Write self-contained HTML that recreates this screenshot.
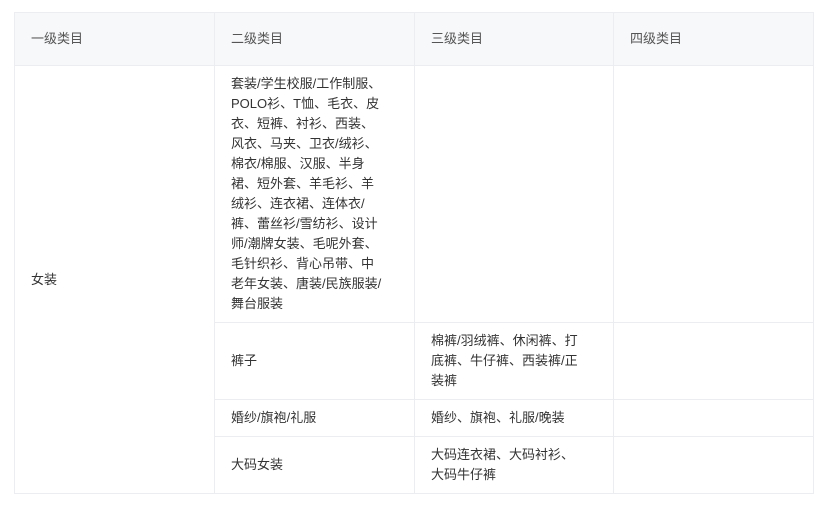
<!DOCTYPE html>
<html><head><meta charset="utf-8"><style>
html,body{margin:0;padding:0;background:#fff;width:827px;height:513px;overflow:hidden}
table{position:absolute;left:14px;top:12px;border-collapse:collapse;table-layout:fixed;width:799px;font-family:"Liberation Sans","Noto Sans CJK SC",sans-serif;font-size:13px;color:#333}
td,th{border:1px solid #ebedf0;padding:8px 16px;line-height:20px;text-align:left;vertical-align:middle;font-weight:normal;white-space:nowrap}
th{background:#f7f8fa;color:#555;height:36px;padding-top:8px;padding-bottom:8px}
</style></head><body>
<table>
<colgroup><col style="width:200px"><col style="width:200px"><col style="width:199px"><col style="width:200px"></colgroup>
<tr><th>一级类目</th><th>二级类目</th><th>三级类目</th><th>四级类目</th></tr>
<tr><td rowspan="4">女装</td><td>套装/学生校服/工作制服、<br>POLO衫、T恤、毛衣、皮<br>衣、短裤、衬衫、西装、<br>风衣、马夹、卫衣/绒衫、<br>棉衣/棉服、汉服、半身<br>裙、短外套、羊毛衫、羊<br>绒衫、连衣裙、连体衣/<br>裤、蕾丝衫/雪纺衫、设计<br>师/潮牌女装、毛呢外套、<br>毛针织衫、背心吊带、中<br>老年女装、唐装/民族服装/<br>舞台服装</td><td></td><td></td></tr>
<tr><td>裤子</td><td>棉裤/羽绒裤、休闲裤、打<br>底裤、牛仔裤、西装裤/正<br>装裤</td><td></td></tr>
<tr><td>婚纱/旗袍/礼服</td><td>婚纱、旗袍、礼服/晚装</td><td></td></tr>
<tr><td>大码女装</td><td>大码连衣裙、大码衬衫、<br>大码牛仔裤</td><td></td></tr>
</table>
</body></html>
